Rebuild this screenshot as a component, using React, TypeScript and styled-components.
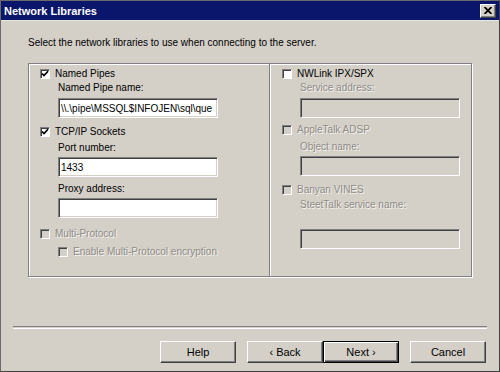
import React from "react";
import styled, { createGlobalStyle } from "styled-components";

const GlobalStyle = createGlobalStyle`
  html, body {
    margin: 0;
    padding: 0;
    background: #d4d0c8;
  }
  body {
    font-family: "Liberation Sans", Arial, sans-serif;
    font-size: 10px;
    color: #000;
  }
`;

const Window = styled.div`
  width: 500px;
  height: 372px;
  box-sizing: border-box;
  background: #d4d0c8;
  border: 1px solid #404040;
  border-top-color: #6b6b6b;
  border-left-color: #6b6b6b;
  display: flex;
  flex-direction: column;
  overflow: hidden;
`;

const TitleBar = styled.div`
  height: 19px;
  background: #0a166c;
  border-bottom: 1px solid #e8e6e0;
  display: flex;
  align-items: center;
  justify-content: space-between;
  padding: 0 3px 0 3px;
`;

const Title = styled.span`
  color: #fff;
  font-weight: bold;
  font-size: 11px;
`;

const CloseButton = styled.div`
  width: 16px;
  height: 14px;
  box-sizing: border-box;
  background: #d4d0c8;
  border: 1px solid;
  border-color: #fff #404040 #404040 #fff;
  box-shadow: inset -1px -1px 0 #808080;
  display: flex;
  align-items: center;
  justify-content: center;
`;

const Body = styled.div`
  flex: 1;
  padding: 0 12px;
  display: flex;
  flex-direction: column;
`;

const Intro = styled.div`
  margin: 15px 0 0 15px;
  line-height: 14px;
`;

const Group = styled.div`
  margin: 13px 0 0 15px;
  width: 444px;
  height: 214px;
  box-sizing: border-box;
  border: 1px solid #808080;
  box-shadow: inset 1px 1px 0 #fff, 1px 1px 0 #fff;
  display: grid;
  grid-template-columns: 241px 1fr;
`;

const Column = styled.div<{ $divider?: boolean }>`
  display: flex;
  flex-direction: column;
  padding: 3px 0 0 ${(p) => (p.$divider ? 11 : 12)}px;
  box-sizing: border-box;
  ${(p) =>
    p.$divider
      ? `border-right: 1px solid #808080; box-shadow: 1px 0 0 #fff;`
      : ""}
`;

const Row = styled.div<{ $mt?: number; $indent?: number }>`
  margin-top: ${(p) => p.$mt ?? 0}px;
  margin-left: ${(p) => p.$indent ?? 0}px;
  display: flex;
  align-items: center;
  gap: 5px;
  height: 14px;
  line-height: 14px;
  white-space: nowrap;
`;

const Label = styled.span<{ $disabled?: boolean }>`
  color: ${(p) => (p.$disabled ? "#8e8b85" : "#000")};
  text-shadow: ${(p) => (p.$disabled ? "1px 1px 0 #f4f3f0" : "none")};
`;

const Box = styled.span<{ $disabled?: boolean }>`
  width: 10px;
  height: 10px;
  box-sizing: border-box;
  flex: none;
  background: ${(p) => (p.$disabled ? "#d4d0c8" : "#fff")};
  border: 1px solid;
  border-color: #808080 #fff #fff #808080;
  box-shadow: inset 1px 1px 0 #404040;
  display: flex;
  align-items: center;
  justify-content: center;
`;

const Field = styled.div<{ $mt?: number; $disabled?: boolean }>`
  margin-top: ${(p) => p.$mt ?? 0}px;
  margin-left: 18px;
  width: 160px;
  height: 20px;
  box-sizing: border-box;
  background: ${(p) => (p.$disabled ? "#d4d0c8" : "#fff")};
  border: 1px solid;
  border-color: #808080 #fff #fff #808080;
  box-shadow: inset 1px 1px 0 #404040, inset -1px -1px 0 #d4d0c8;
  padding: 0 0 0 2px;
  display: flex;
  align-items: center;
  overflow: hidden;
  white-space: nowrap;
`;

const Separator = styled.div`
  margin-top: 49px;
  height: 1px;
  border-top: 1px solid #808080;
  border-bottom: 1px solid #fff;
`;

const ButtonRow = styled.div`
  margin-top: 12px;
  display: flex;
  justify-content: flex-end;
  padding-right: 1px;
`;

const Button = styled.div<{ $default?: boolean; $gap?: number }>`
  width: 76px;
  height: 22px;
  box-sizing: border-box;
  margin-left: ${(p) => p.$gap ?? 0}px;
  display: flex;
  align-items: center;
  justify-content: center;
  font-size: 11px;
  border: 1px solid;
  border-color: ${(p) =>
    p.$default ? "#000" : "#fff #404040 #404040 #fff"};
  box-shadow: ${(p) =>
    p.$default
      ? "inset 1px 1px 0 #fff, inset -1px -1px 0 #404040, inset -2px -2px 0 #808080"
      : "inset -1px -1px 0 #808080"};
  background: #d4d0c8;
`;

const Check = () => (
  <svg width="8" height="8" viewBox="0 0 8 8">
    <path d="M1 3.5 L3 5.6 L7 1.2" fill="none" stroke="#000" strokeWidth="1.7" />
  </svg>
);

const CheckItem = ({
  label,
  checked,
  disabled,
  mt,
  indent,
}: {
  label: string;
  checked?: boolean;
  disabled?: boolean;
  mt?: number;
  indent?: number;
}) => (
  <Row $mt={mt} $indent={indent}>
    <Box $disabled={disabled}>{checked && <Check />}</Box>
    <Label $disabled={disabled}>{label}</Label>
  </Row>
);

export default function App() {
  return (
    <>
      <GlobalStyle />
      <Window>
        <TitleBar>
          <Title>Network Libraries</Title>
          <CloseButton>
            <svg width="8" height="7" viewBox="0 0 8 7">
              <path d="M0.5 0 L7.5 7 M7.5 0 L0.5 7" stroke="#000" strokeWidth="1.8" />
            </svg>
          </CloseButton>
        </TitleBar>
        <Body>
          <Intro>Select the network libraries to use when connecting to the server.</Intro>
          <Group>
            <Column $divider>
              <CheckItem label="Named Pipes" checked />
              <Row $indent={18}>
                <Label>Named Pipe name:</Label>
              </Row>
              <Field $mt={3}>\\.\pipe\MSSQL$INFOJEN\sql\que</Field>
              <CheckItem label="TCP/IP Sockets" checked mt={7} />
              <Row $mt={2} $indent={18}>
                <Label>Port number:</Label>
              </Row>
              <Field $mt={2}>1433</Field>
              <Row $mt={5} $indent={18}>
                <Label>Proxy address:</Label>
              </Row>
              <Field $mt={2} />
              <CheckItem label="Multi-Protocol" disabled mt={9} />
              <CheckItem label="Enable Multi-Protocol encryption" disabled mt={4} indent={18} />
            </Column>
            <Column>
              <CheckItem label="NWLink IPX/SPX" />
              <Row $indent={18}>
                <Label $disabled>Service address:</Label>
              </Row>
              <Field $mt={3} $disabled />
              <CheckItem label="AppleTalk ADSP" disabled mt={5} />
              <Row $mt={3} $indent={18}>
                <Label $disabled>Object name:</Label>
              </Row>
              <Field $mt={2} $disabled />
              <CheckItem label="Banyan VINES" disabled mt={7} />
              <Row $mt={1} $indent={18}>
                <Label $disabled>SteetTalk service name:</Label>
              </Row>
              <Field $mt={17} $disabled />
            </Column>
          </Group>
          <Separator />
          <ButtonRow>
            <Button>Help</Button>
            <Button $gap={11}>‹ Back</Button>
            <Button $default>Next ›</Button>
            <Button $gap={11}>Cancel</Button>
          </ButtonRow>
        </Body>
      </Window>
    </>
  );
}
